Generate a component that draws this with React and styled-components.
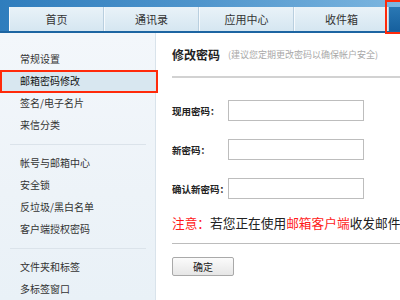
import React from "react";
import styled, { createGlobalStyle } from "styled-components";

const GlobalStyle = createGlobalStyle`
  html, body { margin: 0; padding: 0; }
  body {
    width: 400px;
    height: 300px;
    overflow: hidden;
    background: #ffffff;
    font-family: "Noto Sans CJK SC", "Noto Sans", sans-serif;
    color: #333;
  }
`;

const Page = styled.div`
  width: 400px;
  height: 300px;
  display: flex;
  flex-direction: column;
  overflow: hidden;
`;

const TopBar = styled.div`
  height: 31px;
  flex: none;
  display: flex;
  align-items: flex-end;
  padding-left: 9px;
  background: linear-gradient(90deg, #2f7dbd 0%, #4f95cc 50%, #7cb6e0 100%);
  border-bottom: 2px solid #1d65a2;
`;

const Tab = styled.div`
  box-sizing: border-box;
  width: 95px;
  height: 24px;
  flex: none;
  display: flex;
  align-items: center;
  justify-content: center;
  font-size: 11px;
  color: #333;
  background: linear-gradient(180deg, #e9f2f8 0%, #d5e6f1 100%);
  border-left: 1px solid #f6fafd;
  border-right: 1px solid #b9cfdf;
`;

const ActiveTab = styled.div`
  position: relative;
  flex: 1;
  height: 24px;
  background: linear-gradient(180deg, #2a78b4 0%, #16609e 100%);
  &::after {
    content: "";
    position: absolute;
    top: -7px;
    left: -4px;
    right: -10px;
    bottom: -3px;
    border: 2px solid #ff2a0a;
  }
`;

const Body = styled.div`
  flex: 1;
  display: flex;
  min-height: 0;
`;

const Sidebar = styled.div`
  width: 156px;
  flex: none;
  box-sizing: border-box;
  padding-top: 15px;
  background: linear-gradient(180deg, #f3f7fb 0%, #edf3f8 60%, #e9f1f7 100%);
  border-right: 1px solid #d9e3eb;
`;

const Item = styled.div`
  position: relative;
  height: 22px;
  line-height: 22px;
  padding-left: 20px;
  font-size: 10px;
  color: ${(p) => (p.$active ? "#111" : "#333")};
  background: ${(p) => (p.$active ? "#d8e7f0" : "transparent")};
  ${(p) =>
    p.$active &&
    `
    &::after {
      content: "";
      position: absolute;
      top: 0;
      left: 0;
      right: -3px;
      bottom: -1px;
      border: 2px solid #ff2a0a;
    }
  `}
`;

const Separator = styled.div`
  height: 1px;
  margin: 8px 9px 7px 10px;
  background: #dbe3ea;
`;

const Content = styled.div`
  flex: 1;
  min-width: 0;
  overflow: hidden;
  padding-left: 16px;
  white-space: nowrap;
`;

const Header = styled.div`
  padding-top: 13px;
  padding-bottom: 12px;
  line-height: 18px;
  border-bottom: 2px solid #d2d2d2;
  display: flex;
  align-items: center;
`;

const Title = styled.span`
  font-size: 12px;
  font-weight: bold;
  color: #222;
`;

const Hint = styled.span`
  margin-left: 8px;
  font-size: 9px;
  color: #a8a8a8;
`;

const Form = styled.div`
  margin-top: 22px;
  display: flex;
  flex-direction: column;
  gap: 18px;
`;

const Row = styled.div`
  display: flex;
  align-items: center;
  height: 21px;
`;

const Label = styled.label`
  width: 56px;
  flex: none;
  font-size: 9.5px;
  font-weight: bold;
  color: #222;
`;

const Input = styled.input`
  box-sizing: border-box;
  width: 136px;
  height: 21px;
  margin: 0;
  padding: 0 4px;
  border: 1px solid #bdbdbd;
  background: #fff;
  outline: none;
`;

const Notice = styled.div`
  margin-top: 15px;
  line-height: 18px;
  font-size: 12.7px;
  color: #222;
`;

const Red = styled.span`
  color: #ff1a1a;
`;

const Divider = styled.div`
  margin-top: 11px;
  height: 1px;
  background: #bcbcbc;
`;

const Button = styled.button`
  margin-top: 13px;
  box-sizing: border-box;
  width: 62px;
  height: 19px;
  padding: 0;
  font-family: inherit;
  font-size: 10px;
  color: #222;
  border: 1px solid #a9a9a9;
  border-radius: 2px;
  background: linear-gradient(180deg, #fbfbfb 0%, #e6e6e6 100%);
`;

const groups = [
  ["常规设置", "邮箱密码修改", "签名/电子名片", "来信分类"],
  ["帐号与邮箱中心", "安全锁", "反垃圾/黑白名单", "客户端授权密码"],
  ["文件夹和标签", "多标签窗口"],
];

export default function App() {
  return (
    <>
      <GlobalStyle />
      <Page>
        <TopBar>
          {["首页", "通讯录", "应用中心", "收件箱"].map((t) => (
            <Tab key={t}>{t}</Tab>
          ))}
          <ActiveTab />
        </TopBar>
        <Body>
          <Sidebar>
            {groups.map((g, gi) => (
              <React.Fragment key={gi}>
                {gi > 0 && <Separator />}
                {g.map((t) => (
                  <Item key={t} $active={t === "邮箱密码修改"}>
                    {t}
                  </Item>
                ))}
              </React.Fragment>
            ))}
          </Sidebar>
          <Content>
            <Header>
              <Title>修改密码</Title>
              <Hint>(建议您定期更改密码以确保帐户安全)</Hint>
            </Header>
            <Form>
              <Row>
                <Label>现用密码：</Label>
                <Input type="password" />
              </Row>
              <Row>
                <Label>新密码：</Label>
                <Input type="password" />
              </Row>
              <Row>
                <Label>确认新密码：</Label>
                <Input type="password" />
              </Row>
            </Form>
            <Notice>
              <Red>注意：</Red>若您正在使用<Red>邮箱客户端</Red>收发邮件
            </Notice>
            <Divider />
            <Button>确定</Button>
          </Content>
        </Body>
      </Page>
    </>
  );
}
